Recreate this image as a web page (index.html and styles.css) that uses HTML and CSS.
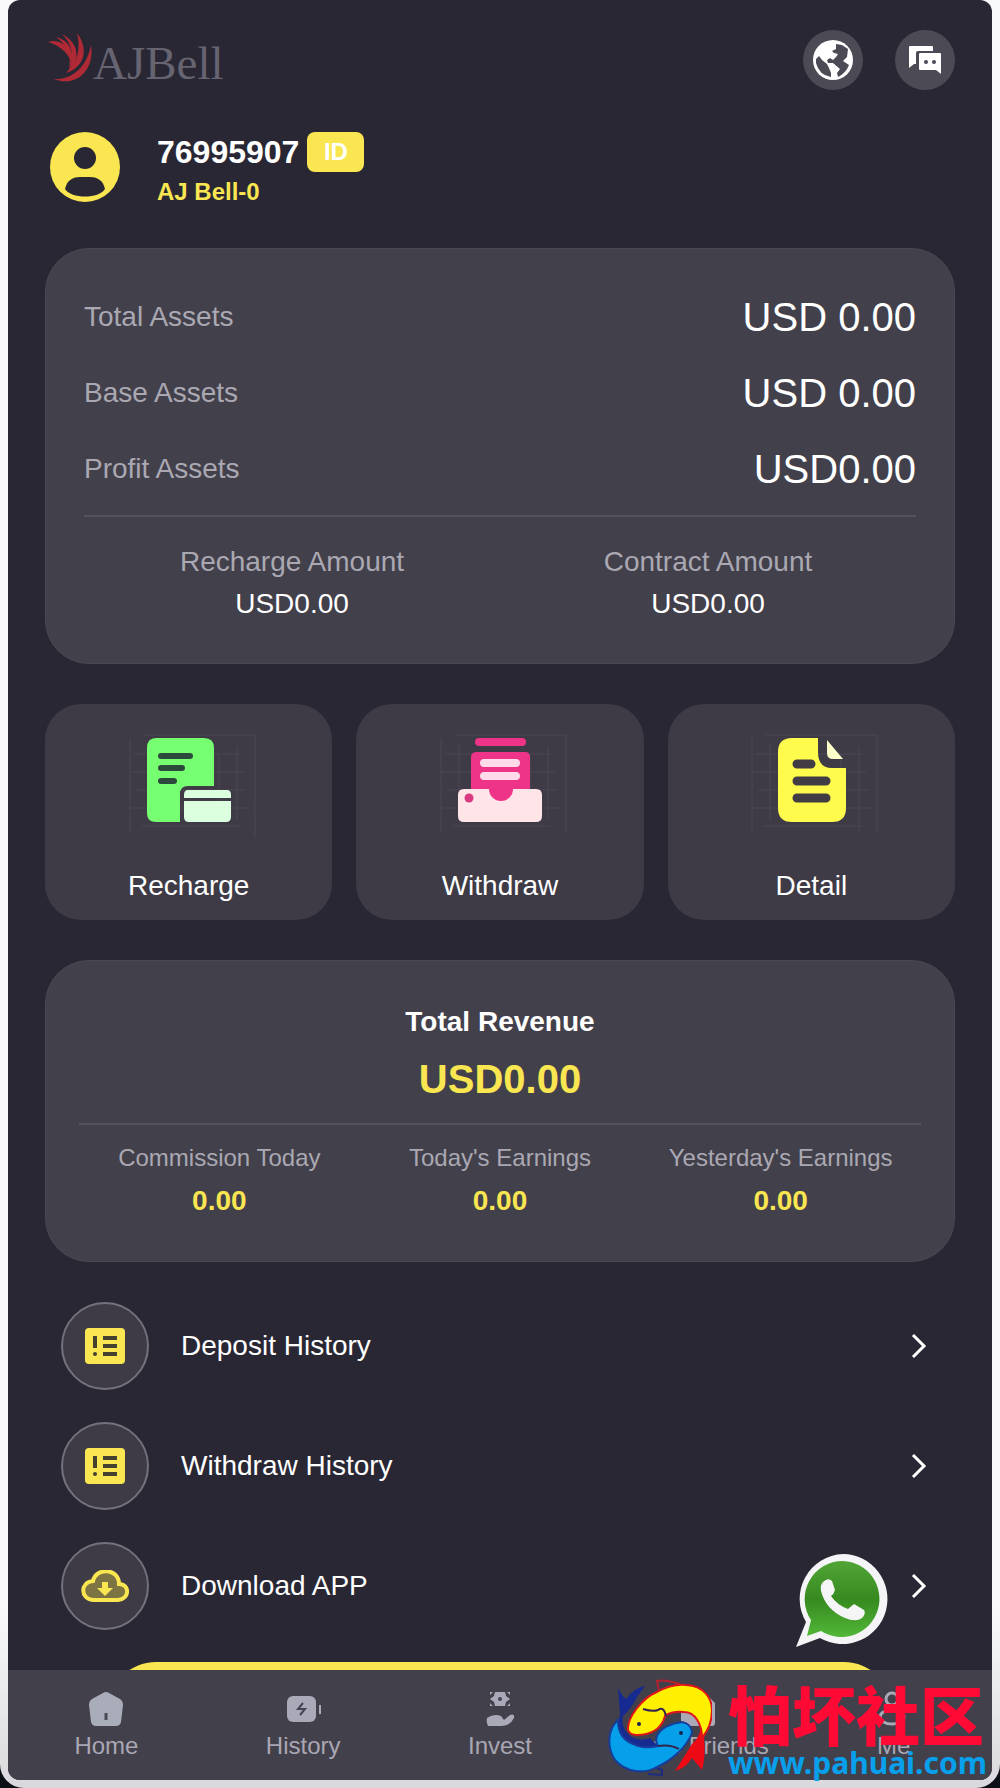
FILE: index.html
```html
<!DOCTYPE html>
<html lang="en">
<head>
<meta charset="utf-8">
<meta name="viewport" content="width=device-width, initial-scale=1">
<title>AJ Bell - Me</title>
<link rel="stylesheet" href="styles.css">
</head>
<body>
<div class="frame">
<div class="app">
  <main class="content">
    <header class="topbar">
      <a class="logo" href="#" aria-label="AJBell">
        <svg class="logo-mark" width="46" height="54" viewBox="0 -3 46 54" fill="#b02a35">
          <path d="M1 9C13 5 24 14 24 28C20 19 12 12 1 9Z"/>
          <path d="M9 4C22 7 30 20 22 36C25 22 20 12 9 4Z"/>
          <path d="M15 1C32 10 34 26 21 39C28 24 26 12 15 1Z"/>
          <path d="M30 0C42 16 38 34 19 40C31 28 34 16 30 0Z"/>
          <path d="M44 12C48 36 30 55 7 46C25 47 40 34 44 12Z"/>
        </svg>
        <span class="logo-text">AJBell</span>
      </a>
      <div class="tools">
        <button class="round-btn" type="button" aria-label="Language">
          <svg width="40" height="40" viewBox="0 0 40 40">
            <circle cx="20" cy="20" r="20" fill="#fff"/>
            <path d="M23 4L29 5L35 9L34 17L30 21L36 25Q33 33 25 37L24 33L27 29L20 23L15 23L14 20L17 18L20 20L23 17L25 14L21 13L19 11L23 9ZM3 19L6 16L9 20L14 24L16 28L18 33L18 37Q6 35 3 23Z" fill="#4c4a55"/>
          </svg>
        </button>
        <button class="round-btn" type="button" aria-label="Messages">
          <svg width="34" height="30" viewBox="0 0 34 30">
            <path d="M2 1H24Q25 1 25 2V6H10Q8 6 8 8V19H6L1 23V2Q1 1 2 1Z" fill="#fff"/>
            <path d="M12 8H32Q33 8 33 9V29L28 25H12Q11 25 11 24V9Q11 8 12 8Z" fill="#fff"/>
            <circle cx="18" cy="17" r="2" fill="#4c4a55"/><circle cx="26" cy="17" r="2" fill="#4c4a55"/>
          </svg>
        </button>
      </div>
    </header>

    <section class="profile">
      <svg width="70" height="70" viewBox="0 0 70 70" aria-hidden="true">
        <circle cx="35" cy="35" r="35" fill="#f9e651"/>
        <circle cx="35" cy="26" r="11" fill="#292734"/>
        <path d="M15 57C17 48 23 45 30 45H40C47 45 53 48 55 57C49 67 21 67 15 57Z" fill="#292734"/>
      </svg>
      <div>
        <div class="name-row"><h1 class="name">76995907</h1><span class="badge">ID</span></div>
        <p class="level">AJ Bell-0</p>
      </div>
    </section>

    <section class="card assets">
      <dl class="asset-list">
        <div class="asset"><dt>Total Assets</dt><dd>USD 0.00</dd></div>
        <div class="asset"><dt>Base Assets</dt><dd>USD 0.00</dd></div>
        <div class="asset"><dt>Profit Assets</dt><dd>USD0.00</dd></div>
      </dl>
      <dl class="amounts">
        <div><dt>Recharge Amount</dt><dd>USD0.00</dd></div>
        <div><dt>Contract Amount</dt><dd>USD0.00</dd></div>
      </dl>
    </section>

    <nav class="actions" aria-label="Account actions">
      <a class="action" href="#">
        <svg width="134" height="110" viewBox="-6 0 134 110">
          <path class="mesh" d="M2 10V104M20 16V92M91 26V88M109 18V92M127 8V112M16 7H128M6 26H112M2 44H116M8 62H118M2 80H122M14 98H112"/>
          <path d="M28 10H76Q86 10 86 20V58H60Q52 58 52 66V94H28Q19 94 19 85V20Q19 10 28 10Z" fill="#76ff70"/>
          <path d="M33 28H62M33 40H54M33 53H46" stroke="#2c4a3c" stroke-width="6" stroke-linecap="round"/>
          <path d="M60 62H99Q103 62 103 67V70H56V67Q56 62 60 62ZM56 73H103V89Q103 94 98 94H61Q56 94 56 89Z" fill="#dcffe0"/>
        </svg>
        <span>Recharge</span>
      </a>
      <a class="action" href="#">
        <svg width="134" height="110" viewBox="-6 0 134 110">
          <path class="mesh" d="M2 10V104M20 16V92M91 26V88M109 18V92M127 8V104M16 7H128M6 26H112M2 44H116M8 62H118M2 80H122M14 98H112"/>
          <rect x="36" y="10" width="51" height="8" rx="4" fill="#ed3488"/>
          <path d="M38 24H86Q91 24 91 29V80H32V29Q32 24 38 24Z" fill="#ed3488"/>
          <path d="M45 35H77M45 48H77" stroke="#ffdbe9" stroke-width="8" stroke-linecap="round"/>
          <path d="M25 61H50A12 12 0 0 0 74 61H97Q103 61 103 67V88Q103 94 97 94H25Q19 94 19 88V67Q19 61 25 61Z" fill="#ffe4e8"/>
          <circle cx="30" cy="70" r="4.500" fill="#d93a82"/>
        </svg>
        <span>Withdraw</span>
      </a>
      <a class="action" href="#">
        <svg width="134" height="110" viewBox="-6 0 134 110">
          <path class="mesh" d="M2 10V104M20 16V92M91 26V88M109 18V104M127 8V104M16 7H128M6 26H112M2 44H116M8 62H118M2 80H122M14 98H112"/>
          <path d="M42 10H68V24Q68 40 82 40H96V80Q96 94 82 94H42Q28 94 28 80V24Q28 10 42 10Z" fill="#fffb4d"/>
          <path d="M77 12L93 31H83Q77 31 77 25Z" fill="#fcffc9"/>
          <path d="M47 36H61M47 53H76M47 70H76" stroke="#423d44" stroke-width="9" stroke-linecap="round"/>
        </svg>
        <span>Detail</span>
      </a>
    </nav>

    <section class="card revenue">
      <h2 class="revenue-title">Total Revenue</h2>
      <p class="revenue-total">USD0.00</p>
      <dl class="earnings">
        <div><dt>Commission Today</dt><dd>0.00</dd></div>
        <div><dt>Today's Earnings</dt><dd>0.00</dd></div>
        <div><dt>Yesterday's Earnings</dt><dd>0.00</dd></div>
      </dl>
    </section>

    <ul class="menu">
      <li><a class="menu-link" href="#">
        <span class="menu-icon"><svg width="40" height="36" viewBox="0 0 40 36"><rect width="40" height="36" rx="4" fill="#f9e651"/><path d="M10 8V20M18 10H32M18 18H32M18 26H32" stroke="#45412f" stroke-width="4"/><circle cx="10" cy="26" r="2" fill="#45412f"/></svg></span>
        <span>Deposit History</span>
        <svg class="chevron" width="16" height="26" viewBox="0 0 16 26"><path d="M2 2L13 13L2 24"/></svg>
      </a></li>
      <li><a class="menu-link" href="#">
        <span class="menu-icon"><svg width="40" height="36" viewBox="0 0 40 36"><rect width="40" height="36" rx="4" fill="#f9e651"/><path d="M10 8V20M18 10H32M18 18H32M18 26H32" stroke="#45412f" stroke-width="4"/><circle cx="10" cy="26" r="2" fill="#45412f"/></svg></span>
        <span>Withdraw History</span>
        <svg class="chevron" width="16" height="26" viewBox="0 0 16 26"><path d="M2 2L13 13L2 24"/></svg>
      </a></li>
      <li><a class="menu-link" href="#">
        <span class="menu-icon"><svg width="48" height="32" viewBox="0 0 48 32"><path d="M12 30H37C49 29 49 14 38 14C38 -2 15 -3 12 11C-1 12 -1 29 12 30Z" fill="#7d7443" stroke="#f9e651" stroke-width="4"/><path d="M21 12H27V18H32L24 26L16 18H21Z" fill="#f9e651"/></svg></span>
        <span>Download APP</span>
        <svg class="chevron" width="16" height="26" viewBox="0 0 16 26"><path d="M2 2L13 13L2 24"/></svg>
      </a></li>
    </ul>

    <button class="primary" type="button" aria-label="Log out"></button>
  </main>

  <nav class="tabs" aria-label="Main">
    <a class="tab" href="#">
      <svg width="40" height="36" viewBox="0 0 40 36"><path d="M17 2Q20 0 23 2L34 8Q37 10 37 14L35 31Q34 35 30 35H10Q6 35 5 31L3 14Q3 10 6 8Z" fill="#a9adba"/><path d="M20 22V29" stroke="#4a4a55" stroke-width="3"/></svg>
      <span>Home</span>
    </a>
    <a class="tab" href="#">
      <svg width="40" height="36" viewBox="0 0 40 36"><rect x="4" y="5" width="29" height="26" rx="6" fill="#a9a9b7"/><path d="M20 12L15 18H22L17 24" fill="none" stroke="#454452" stroke-width="2"/><path d="M37 14V23" stroke="#a9a9b7" stroke-width="2"/></svg>
      <span>History</span>
    </a>
    <a class="tab" href="#">
      <svg width="40" height="36" viewBox="0 0 40 36" fill="#a9a9b7"><path d="M15 1H25L26 5L30 8L26 11L25 15H15L14 11L10 8L14 5ZM10 1H13L10 4ZM27 1H30V4ZM10 12L13 15H10ZM30 12V15H27Z"/><circle cx="20" cy="8" r="2" fill="#454452"/><path d="M7 27Q14 22 21 25L24 29L30 24Q35 22 34 27Q30 35 22 35H8Q6 31 7 27Z"/></svg>
      <span>Invest</span>
    </a>
    <a class="tab" href="#">
      <svg width="40" height="36" viewBox="0 0 40 36"><path d="M4 20L28 2L38 12V32Q38 35 35 35H7Q4 35 4 32Z" fill="#a9a9b7"/></svg>
      <span>Invite Friends</span>
    </a>
    <a class="tab" href="#">
      <svg width="40" height="36" viewBox="0 0 40 36" fill="none" stroke="#a9a9b7" stroke-width="3"><circle cx="18" cy="8" r="6"/><ellipse cx="18" cy="26" rx="12" ry="7"/></svg>
      <span>Me</span>
    </a>
  </nav>

  <a class="whatsapp" href="#" aria-label="WhatsApp">
    <svg width="94" height="94" viewBox="0 0 94 94">
      <defs><linearGradient id="green" x1="0" y1="0" x2="0" y2="1"><stop offset="0" stop-color="#51a536"/><stop offset=".5" stop-color="#378a20"/><stop offset="1" stop-color="#52b738"/></linearGradient></defs>
      <path d="M48 1A45 45 0 1 1 25 85L1 94L11 69A45 45 0 0 1 48 1Z" fill="#f5f5f7"/>
      <path d="M48 8A38 38 0 1 1 26 78L12 83L16 67A38 38 0 0 1 48 8Z" fill="url(#green)"/>
      <path d="M28 29Q33 24 37 28L40 37Q39 41 36 43Q42 52 53 56L59 51L69 57Q71 60 68 64Q62 70 50 65Q31 57 26 38Q25 32 28 29Z" fill="#f5f5f7"/>
    </svg>
  </a>
</div>
</div>

<aside class="stamp">
  <svg width="112" height="104" viewBox="0 0 112 104">
    <path d="M20 36L18 10Q22 18 26 21Q34 10 45 8L37 19Q32 30 23 38C20 52 32 66 50 60L58 68C40 72 22 66 18 48Z" fill="#172a91"/>
    <path d="M59 13L57 3Q64 1 80 6" fill="none" stroke="#b5202e" stroke-width="2"/>
    <path d="M54 89L62 92V97L48 96" fill="none" stroke="#1c2d80" stroke-width="2"/>
    <path d="M101 50Q99 60 92 66L75 93Q86 90 92 80L102 92Q106 78 104 60L107 50Z" fill="#ed0a14"/>
    <path d="M18 42C7 52 7 70 15 82C26 95 45 96 57 89C72 82 86 70 92 55C92 49 88 45 82 44C72 45 60 50 57 58Q55 64 58 68C48 70 40 70 33 66C22 62 18 54 18 42Z" fill="#06a0ea" stroke="#173c9a" stroke-width="2"/>
    <path d="M28 52C27 40 42 20 57 14C66 9 76 6 86 7C104 8 112 20 112 32C112 44 107 54 102 60C102 46 95 34 84 34C76 33 68 35 65 38C62 50 52 57 37 57Q30 57 28 52Z" fill="#fff000" stroke="#e0141c" stroke-width="2"/>
    <path d="M43 31Q53 34 58 32Q64 28 66 38M58 68Q70 66 79 71" fill="none" stroke="#35254c" stroke-width="2"/>
    <circle cx="39" cy="46" r="2" fill="#16234d"/><circle cx="81" cy="55" r="2" fill="#16234d"/>
  </svg>
  <div class="stamp-words">
    <span class="stamp-name" lang="zh">怕坏社区</span>
    <span class="stamp-url">www.pahuai.com</span>
  </div>
</aside>
</body>
</html>
```
FILE: styles.css
```css
* { box-sizing: border-box; }

body {
  margin: 0;
  background: #0b0f16;
  color: #fff;
  font-family: "Liberation Sans", Arial, sans-serif;
  font-size: 28px;
  line-height: 32px;
}

h1, h2, p, dl, dd, ul { margin: 0; padding: 0; }
ul { list-style: none; }
a { color: inherit; text-decoration: none; }
button { border: 0; padding: 0; font: inherit; color: inherit; cursor: pointer; }
svg { display: block; flex: none; }

.frame {
  height: 100vh;
  padding: 0 8px 8px;
  border-radius: 0 0 24px 24px;
  background: linear-gradient(#f9f9fb 90%, #d9d9dd);
}

.app {
  position: relative;
  display: flex;
  flex-direction: column;
  height: 100%;
  overflow: hidden;
  border-radius: 12px;
  background: #292734;
}

.content {
  flex: 1;
  min-height: 0;
  padding: 30px 37px 0;
  overflow-y: auto;
  scrollbar-width: none;
}

.topbar { display: flex; justify-content: space-between; align-items: flex-start; height: 60px; }
.logo { display: flex; align-items: flex-start; padding-left: 2px; }
.logo-text {
  color: #666471;
  font-family: "Liberation Serif", serif;
  font-size: 47px;
  line-height: 66px;
}
.tools { display: flex; gap: 32px; }
.round-btn {
  display: grid;
  place-items: center;
  width: 60px;
  height: 60px;
  border-radius: 50%;
  background: #4c4a55;
}

.profile { display: flex; align-items: flex-start; gap: 37px; padding: 42px 5px 36px; }
.name-row { display: flex; align-items: center; gap: 8px; }
.name { font-size: 32px; line-height: 40px; }
.badge {
  width: 57px;
  border-radius: 8px;
  background: #f9e651;
  font-size: 24px;
  font-weight: bold;
  line-height: 40px;
  text-align: center;
}
.level { color: #f9e651; font-size: 24px; font-weight: bold; line-height: 40px; }

.card {
  border: 1px solid #4a4853;
  border-radius: 44px;
  background: #42404b;
}
dt { color: #aaa8b2; }

.assets { padding: 30px 38px 38px; }
.asset-list { border-bottom: 2px solid #54525e; padding-bottom: 8px; }
.asset { display: flex; justify-content: space-between; align-items: center; height: 76px; }
.asset dd { font-size: 40px; }
.amounts {
  display: grid;
  grid-template-columns: 1fr 1fr;
  padding-top: 24px;
  text-align: center;
}
.amounts dt, .amounts dd { line-height: 42px; }

.actions { display: grid; grid-template-columns: repeat(3, 1fr); gap: 24px; margin: 40px 0; }
.action {
  display: flex;
  flex-direction: column;
  align-items: center;
  gap: 32px;
  height: 216px;
  padding-top: 24px;
  border-radius: 36px;
  background: #3e3b47;
}
.mesh { fill: none; stroke: #4a4854; stroke-width: 1; }

.revenue { padding: 40px 33px 38px; text-align: center; }
.revenue-title { font-size: 28px; line-height: 42px; }
.revenue-total { color: #f9e651; font-size: 40px; font-weight: bold; line-height: 72px; }
.earnings {
  display: grid;
  grid-template-columns: repeat(3, 1fr);
  margin-top: 8px;
  padding-top: 12px;
  border-top: 2px solid #54525e;
}
.earnings dt { font-size: 24px; line-height: 42px; }
.earnings dd { color: #f9e651; font-weight: bold; line-height: 44px; }

.menu { display: grid; gap: 32px; padding: 40px 28px 32px 16px; }
.menu-link { display: flex; align-items: center; gap: 32px; }
.menu-icon {
  display: grid;
  place-items: center;
  width: 88px;
  height: 88px;
  border: 2px solid #74717d;
  border-radius: 50%;
  background: #3e3b47;
}
.chevron { margin-left: auto; fill: none; stroke: #fff; stroke-width: 3; }

.primary {
  display: block;
  width: calc(100% - 126px);
  height: 96px;
  margin: 0 auto;
  border-radius: 48px;
  background: #f9e651;
}

.tabs {
  display: grid;
  grid-template-columns: repeat(5, 1fr);
  padding: 21px 0 18px;
  background: #42404b;
}
.tab {
  display: flex;
  flex-direction: column;
  align-items: center;
  gap: 3px;
  color: #a9a7b3;
  font-size: 24px;
  white-space: nowrap;
}

.whatsapp { position: absolute; right: 103px; bottom: 133px; }

.stamp {
  position: absolute;
  right: 13px;
  bottom: 6px;
  display: flex;
  align-items: center;
  gap: 16px;
  pointer-events: none;
}
.stamp-words { display: flex; flex-direction: column; }
.stamp-name {
  color: #ff0a35;
  font-family: "Noto Sans CJK SC", sans-serif;
  font-size: 64px;
  font-weight: 900;
  line-height: 66px;
}
.stamp-url {
  color: #08a0ec;
  font-family: "Noto Sans", sans-serif;
  font-size: 30px;
  font-weight: bold;
  line-height: 36px;
}
```
